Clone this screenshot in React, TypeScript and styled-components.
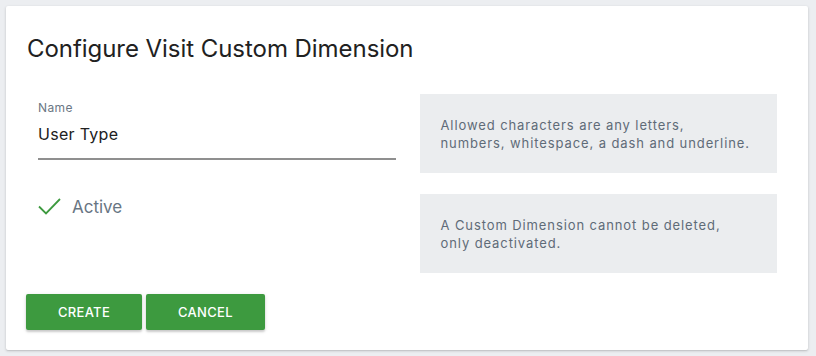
import React from 'react';
import styled, { createGlobalStyle } from 'styled-components';

const GlobalStyle = createGlobalStyle`
  html, body {
    margin: 0;
    padding: 0;
    background: #eceef1;
  }
  body {
    font-family: Inter, "Noto Sans", sans-serif;
    -webkit-font-smoothing: antialiased;
  }
`;

const Page = styled.div`
  padding: 6px 8px 6px 6px;
`;

const Card = styled.div`
  background: #fff;
  border-radius: 2px;
  box-shadow: 0 1px 3px rgba(0, 0, 0, 0.18), 0 1px 1px rgba(0, 0, 0, 0.06);
  padding: 27px 19px 20px 20px;
  height: 344px;
  box-sizing: border-box;
`;

const Title = styled.h2`
  margin: 0 0 29px;
  font-size: 24px;
  line-height: 32px;
  font-weight: 400;
  color: #212121;
  letter-spacing: -0.05px;
  padding-left: 1px;
`;

const Row = styled.div`
  display: grid;
  grid-template-columns: 1fr 1fr;
  margin-bottom: 21px;
`;

const Col = styled.div`
  padding: 0 12px;
`;

const Field = styled.div`
  padding-top: 6px;
`;

const Label = styled.label`
  display: block;
  font-size: 12px;
  line-height: 16px;
  color: #6b7785;
  letter-spacing: 0.4px;
  margin-bottom: 7px;
`;

const Input = styled.div`
  font-size: 16px;
  line-height: 22px;
  color: #212121;
  letter-spacing: 0.3px;
  padding-bottom: 13px;
  border-bottom: 2px solid #8f8f8f;
`;

const CheckRow = styled.div`
  display: flex;
  align-items: center;
  gap: 10px;
  padding-top: 2px;
`;

const CheckText = styled.span`
  font-size: 17px;
  line-height: 22px;
  color: #687583;
`;

const Help = styled.div`
  background: #ebedef;
  height: 79px;
  box-sizing: border-box;
  padding: 0 21px;
  display: flex;
  align-items: center;
  font-size: 13px;
  line-height: 18px;
  color: #5f6b78;
  letter-spacing: 0.9px;
`;

const Actions = styled.div`
  display: flex;
  gap: 4px;
`;

const Button = styled.button`
  height: 36px;
  padding: 0 32px;
  border: none;
  border-radius: 2px;
  background: #3d9a3f;
  color: #fff;
  font-family: inherit;
  font-size: 13px;
  font-weight: 500;
  letter-spacing: 0.3px;
  text-transform: uppercase;
  box-shadow: 0 2px 2px rgba(0, 0, 0, 0.14), 0 1px 4px rgba(0, 0, 0, 0.12);
  cursor: pointer;
`;

const Check = () => (
  <svg width="24" height="20" viewBox="0 0 24 20">
    <polyline points="1,9.5 8,16.5 22,2" fill="none" stroke="#3d9a3f" strokeWidth="1.8" />
  </svg>
);

export default function App() {
  return (
    <Page>
      <GlobalStyle />
      <Card>
        <Title>Configure Visit Custom Dimension</Title>
        <Row>
          <Col>
            <Field>
              <Label>Name</Label>
              <Input>User Type</Input>
            </Field>
          </Col>
          <Col>
            <Help>
              <div>
                Allowed characters are any letters,
                <br />
                numbers, whitespace, a dash and underline.
              </div>
            </Help>
          </Col>
        </Row>
        <Row>
          <Col>
            <CheckRow>
              <Check />
              <CheckText>Active</CheckText>
            </CheckRow>
          </Col>
          <Col>
            <Help>
              <div>
                A Custom Dimension cannot be deleted,
                <br />
                only deactivated.
              </div>
            </Help>
          </Col>
        </Row>
        <Actions>
          <Button>Create</Button>
          <Button>Cancel</Button>
        </Actions>
      </Card>
    </Page>
  );
}
